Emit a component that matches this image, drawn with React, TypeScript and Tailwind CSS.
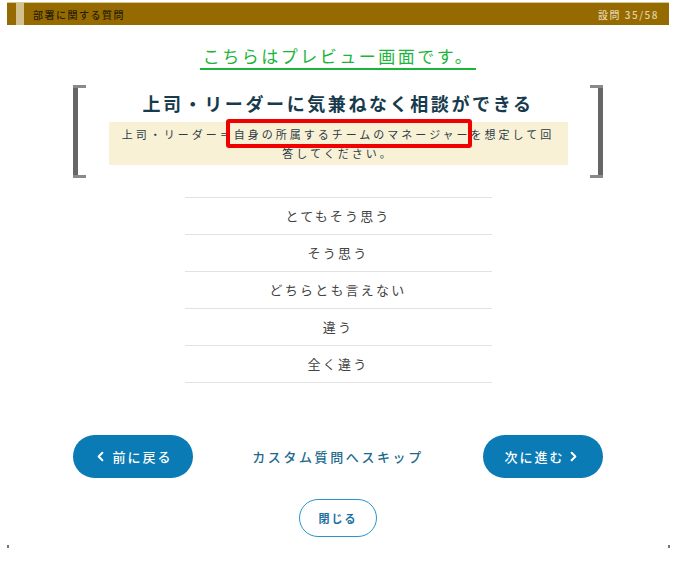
import { ChevronLeft, ChevronRight } from "lucide-react";

// =============================================================================
// Preview screen for a single survey question.
// =============================================================================

const JP = { fontFamily: '"Noto Sans CJK JP", "Noto Sans", sans-serif' };

const OPTIONS = ["とてもそう思う", "そう思う", "どちらとも言えない", "違う", "全く違う"];

function Bracket({ side }: { side: "left" | "right" }) {
  const isLeft = side === "left";
  return (
    <div className={`relative h-[93px] w-[13px] flex-shrink-0 ${isLeft ? "" : "rotate-180"}`}>
      <div className="absolute left-0 top-0 h-full w-[5px] bg-[#666]" />
      <div className="absolute left-0 top-0 h-[3px] w-[13px] bg-[#8a8a8a]" />
      <div className="absolute bottom-0 left-0 h-[3px] w-[13px] bg-[#8a8a8a]" />
    </div>
  );
}

export default function App() {
  return (
    <div className="relative h-[574px] w-[676px] bg-white" style={JP}>
      {/* Header */}
      <div className="mx-[7px] mt-[2px] flex h-[23px] items-center border-t border-[#d8c89a] bg-[#956a00]">
        <div className="ml-[2px] h-full w-[7px] bg-[#956a00]" />
        <div className="h-full w-[8px] bg-[#d2c08f]" />
        <div className="ml-[9px] text-[10px] font-medium tracking-[1.5px] text-[#2b1f00]">部署に関する質問</div>
        <div className="ml-auto mr-[10px] text-[10px] font-medium tracking-[1.5px] text-[#e3d3a6]">設問 35/58</div>
      </div>

      {/* Preview notice */}
      <div className="mt-[19px] flex justify-center">
        <div className="border-b-2 border-[#1cb53a] pl-[3px] pr-[2px] text-[17px] leading-[24px] tracking-[2.5px] text-[#1cb53a]">
          こちらはプレビュー画面です。
        </div>
      </div>

      {/* Question */}
      <div className="mx-auto mt-[15px] flex w-[530px] items-start justify-between">
        <Bracket side="left" />
        <div className="flex flex-1 flex-col items-center pt-[5px]">
          <div className="text-[18px] font-bold leading-[26px] tracking-[2.6px] text-[#173a4c]">
            上司・リーダーに気兼ねなく相談ができる
          </div>
          <div className="relative mt-[6px] w-[459px] bg-[#f9f1d6] px-[10px] pb-[2px] pt-[3px] text-center text-[11px] leading-[19px] tracking-[3px] text-[#2a3b48]">
            上司・リーダー＝自身の所属するチームのマネージャーを想定して回答してください。
            <div className="absolute left-[117px] top-[-3px] h-[29px] w-[246px] rounded-[3px] border-4 border-[#f00000]" />
          </div>
        </div>
        <Bracket side="right" />
      </div>

      {/* Options */}
      <div className="mx-auto mt-[19px] w-[307px] border-t border-[#e2e2e2]">
        {OPTIONS.map((opt) => (
          <div
            key={opt}
            className="flex h-[37px] items-center justify-center border-b border-[#e2e2e2] text-[13px] tracking-[2.2px] text-[#444]"
          >
            {opt}
          </div>
        ))}
      </div>

      {/* Navigation */}
      <div className="mx-auto mt-[52px] flex w-[530px] items-center justify-between">
        <button className="flex h-[43px] w-[120px] items-center justify-center gap-[4px] rounded-full bg-[#0a7bb4] text-[13px] font-medium tracking-[2px] text-white">
          <ChevronLeft size={15} strokeWidth={3.2} />
          前に戻る
        </button>
        <div className="text-[13px] font-medium tracking-[2.6px] text-[#1e6a8d]">カスタム質問へスキップ</div>
        <button className="flex h-[43px] w-[120px] items-center justify-center gap-[2px] rounded-full bg-[#0a7bb4] text-[13px] font-medium tracking-[2px] text-white">
          次に進む
          <ChevronRight size={15} strokeWidth={3.2} />
        </button>
      </div>

      <div className="mt-[21px] flex justify-center">
        <button className="h-[38px] w-[78px] rounded-full border border-[#2d93c9] text-[11px] font-bold tracking-[2px] text-[#1b6f9f]">
          閉じる
        </button>
      </div>

      {/* corner marks */}
      <div className="absolute left-[7px] top-[543px] h-[3px] w-[2px] bg-[#777]" />
      <div className="absolute left-[668px] top-[543px] h-[3px] w-[2px] bg-[#777]" />
    </div>
  );
}
